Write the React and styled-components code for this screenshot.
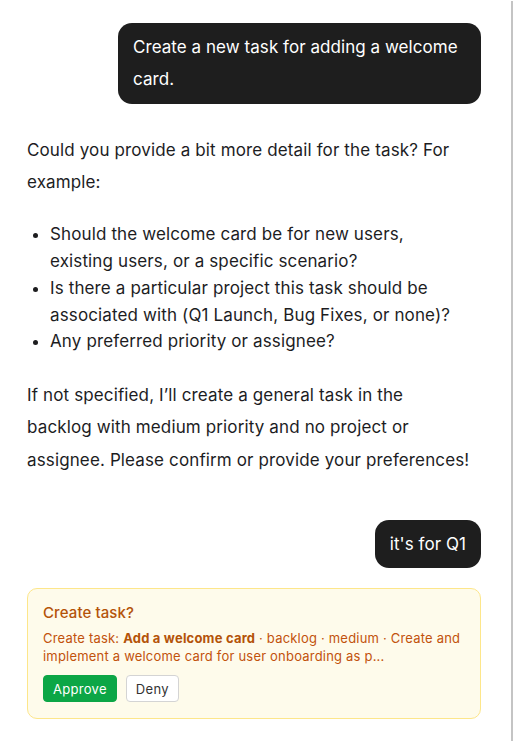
import React from 'react';
import styled, { createGlobalStyle } from 'styled-components';

const GlobalStyle = createGlobalStyle`
    html, body {
        margin: 0;
        padding: 0;
        background: #ffffff;
    }
    body {
        font-family: 'Inter', 'Noto Sans', sans-serif;
        color: #1d1d1f;
        -webkit-font-smoothing: antialiased;
    }
`;

const Frame = styled.div`
    display: flex;
    width: 514px;
    height: 741px;
    overflow: hidden;
`;

const Thread = styled.div`
    width: 508px;
    box-sizing: border-box;
    padding: 23px 27px 0 27px;
    display: flex;
    flex-direction: column;
`;

const Rail = styled.div`
    width: 2px;
    margin: 1px 0 0 3px;
    background: #c4c4c4;
`;

const UserRow = styled.div`
    display: flex;
    justify-content: flex-end;
`;

const Bubble = styled.div`
    max-width: 333px;
    padding: 8px 15px;
    background: #1e1e1e;
    color: #ffffff;
    border-radius: 14px;
    font-size: 17px;
    line-height: 1.9;
    letter-spacing: 0.05px;
`;

const Reply = styled.div`
    max-width: 446px;
    font-size: 17px;
    line-height: 1.9;
    letter-spacing: 0.13px;
    color: #1d1d1f;
    margin: 30px 0 44px 0;
`;

const Para = styled.p`
    margin: 0;
`;

const List = styled.ul`
    max-width: 410px;
    margin: 23px 0 24px 0;
    padding-left: 23px;
    line-height: 26.8px;
`;

const Card = styled.div`
    margin-top: 20px;
    padding: 12px 15px 16px 15px;
    background: #fefbeb;
    border: 1px solid #fde68a;
    border-radius: 10px;
`;

const CardTitle = styled.div`
    font-size: 15px;
    font-weight: 500;
    color: #b45309;
    line-height: 22px;
    letter-spacing: 0.1px;
    margin: 1px 0 5px 0;
`;

const CardText = styled.div`
    font-size: 13px;
    line-height: 18px;
    letter-spacing: 0.2px;
    color: #c2520c;

    strong {
        font-weight: 700;
        color: #b45309;
    }
`;

const Actions = styled.div`
    display: flex;
    gap: 9px;
    margin-top: 10px;
`;

const Button = styled.button`
    font-family: inherit;
    font-size: 13px;
    letter-spacing: 0.3px;
    height: 27px;
    padding: 0 9px;
    border-radius: 4px;
    border: 1px solid ${(p) => (p.$primary ? '#0ca646' : '#d4d4d4')};
    background: ${(p) => (p.$primary ? '#0ca646' : '#ffffff')};
    color: ${(p) => (p.$primary ? '#ffffff' : '#333333')};
    cursor: pointer;
`;

const App = () => {
    return (
        <>
            <GlobalStyle />
            <Frame>
                <Thread>
                    <UserRow>
                        <Bubble>Create a new task for adding a welcome card.</Bubble>
                    </UserRow>

                    <Reply>
                        <Para>Could you provide a bit more detail for the task? For example:</Para>
                        <List>
                            <li>Should the welcome card be for new users, existing users, or a specific scenario?</li>
                            <li>Is there a particular project this task should be associated with (Q1 Launch, Bug Fixes, or none)?</li>
                            <li>Any preferred priority or assignee?</li>
                        </List>
                        <Para>
                            If not specified, I’ll create a general task in the
                            <br />
                            backlog with medium priority and no project or
                            <br />
                            assignee. Please confirm or provide your preferences!
                        </Para>
                    </Reply>

                    <UserRow>
                        <Bubble>it's for Q1</Bubble>
                    </UserRow>

                    <Card>
                        <CardTitle>Create task?</CardTitle>
                        <CardText>
                            Create task: <strong>Add a welcome card</strong> · backlog · medium · Create and
                            implement a welcome card for user onboarding as p...
                        </CardText>
                        <Actions>
                            <Button $primary>Approve</Button>
                            <Button>Deny</Button>
                        </Actions>
                    </Card>
                </Thread>
                <Rail />
            </Frame>
        </>
    );
};

export default App;
